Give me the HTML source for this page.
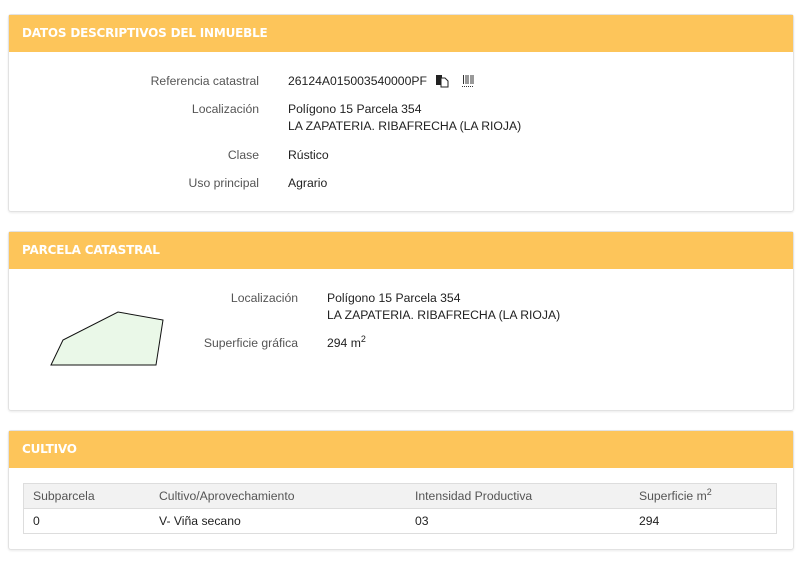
<!DOCTYPE html>
<html><head><meta charset="utf-8"><style>
body{margin:0;width:800px;height:562px;background:#fff;font-family:"Liberation Sans",sans-serif;font-size:12.2px;color:#222;position:relative;overflow:hidden}
.p{position:absolute;left:8px;width:784px;border:1px solid #e2e2e2;border-radius:3px;box-shadow:0 1px 2px rgba(0,0,0,.08);background:#fff}
.h{background:#fdc55a;height:37px;line-height:37px;padding-left:13px;color:#fff;font-weight:bold;font-size:12px;font-family:"DejaVu Sans",sans-serif;letter-spacing:-0.2px}
.t{position:absolute;white-space:nowrap}
.l{color:#555;text-align:right}
.g{color:#555}
sup{font-size:9px;line-height:0}
</style></head><body>
<div class="p" style="top:14px;height:196px"><div class="h">DATOS DESCRIPTIVOS DEL INMUEBLE</div></div>
<div class="t l" style="right:541px;top:74px">Referencia catastral</div>
<div class="t" style="left:288px;top:74px">26124A015003540000PF</div>
<svg class="t" style="left:435px;top:74px" width="14" height="14"><rect x="1" y="1" width="6" height="10" fill="#222"/><path d="M6 4h4l3 3v6H6z" fill="#fff" stroke="#222"/></svg>
<svg class="t" style="left:461px;top:74px" width="14" height="14"><path d="M2.5 1v9M5 1v9M7 1v9M10 1v9M12 1v9" stroke="#333" stroke-width="1"/><path d="M1 12.5h12" stroke="#333" stroke-dasharray="1 1"/></svg>
<div class="t l" style="right:541px;top:102px">Localización</div>
<div class="t" style="left:288px;top:102px">Polígono 15 Parcela 354</div>
<div class="t" style="left:288px;top:119px">LA ZAPATERIA. RIBAFRECHA (LA RIOJA)</div>
<div class="t l" style="right:541px;top:148px">Clase</div>
<div class="t" style="left:288px;top:148px">Rústico</div>
<div class="t l" style="right:541px;top:176px">Uso principal</div>
<div class="t" style="left:288px;top:176px">Agrario</div>

<div class="p" style="top:231px;height:178px"><div class="h">PARCELA CATASTRAL</div></div>
<svg class="t" style="left:0;top:300px" width="200" height="80"><polygon points="51,65 63,40 118,12 163,20 156,65" fill="#eaf8e8" stroke="#111" stroke-width="1"/></svg>
<div class="t l" style="right:502px;top:291px">Localización</div>
<div class="t" style="left:327px;top:291px">Polígono 15 Parcela 354</div>
<div class="t" style="left:327px;top:308px">LA ZAPATERIA. RIBAFRECHA (LA RIOJA)</div>
<div class="t l" style="right:502px;top:336px">Superficie gráfica</div>
<div class="t" style="left:327px;top:336px">294 m<sup>2</sup></div>

<div class="p" style="top:430px;height:118px"><div class="h">CULTIVO</div></div>
<div class="t" style="left:23px;top:483px;width:752px;height:49px;border:1px solid #ddd;background:#fff"></div>
<div class="t" style="left:24px;top:484px;width:752px;height:24px;background:#f2f2f2;border-bottom:1px solid #ddd"></div>
<div class="t g" style="left:33px;top:489px">Subparcela</div>
<div class="t g" style="left:159px;top:489px">Cultivo/Aprovechamiento</div>
<div class="t g" style="left:415px;top:489px">Intensidad Productiva</div>
<div class="t g" style="left:639px;top:489px">Superficie m<sup>2</sup></div>
<div class="t" style="left:33px;top:514px">0</div>
<div class="t" style="left:159px;top:514px">V- Viña secano</div>
<div class="t" style="left:415px;top:514px">03</div>
<div class="t" style="left:639px;top:514px">294</div>
</body></html>
